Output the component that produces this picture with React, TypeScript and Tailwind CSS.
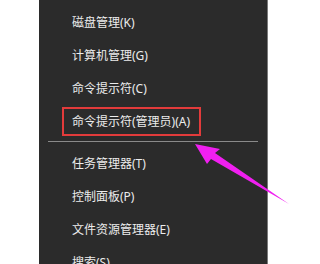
const topItems = ["磁盘管理(K)", "计算机管理(G)", "命令提示符(C)"];
const bottomItems = ["任务管理器(T)", "控制面板(P)", "文件资源管理器(E)", "搜索(S)"];

function MenuRow({ label }: { label: string }) {
  return (
    <div className="h-[33px] flex items-center pl-[33px] text-[12px] text-[#ececec] whitespace-nowrap">
      {label}
    </div>
  );
}

export default function App() {
  return (
    <div
      className="relative w-[316px] h-[264px] overflow-hidden bg-white"
      style={{ fontFamily: '"Noto Sans", "Noto Sans CJK SC", sans-serif' }}
    >
      <div className="ml-[39px] w-[229px] h-[264px] bg-[#2b2b2b] border-r border-[#7a7a7a] pt-[6px]">
        {topItems.map((item) => (
          <MenuRow key={item} label={item} />
        ))}

        <div className="h-[33px] flex items-center pl-[23px]">
          <div className="h-[29px] w-[139px] flex items-center pl-[8px] border-2 border-[#e23b3b] text-[12px] text-[#ececec] whitespace-nowrap">
            命令提示符(管理员)(A)
          </div>
        </div>

        <div className="h-[9px] pt-[3px] px-[9px]">
          <div className="h-px bg-[#8a8a8a]" />
        </div>

        {bottomItems.map((item) => (
          <MenuRow key={item} label={item} />
        ))}
      </div>

      {/* annotation arrow */}
      <svg className="absolute left-0 top-0" width="316" height="264" viewBox="0 0 316 264">
        <polygon
          points="195,144 220,149 215,153 289,204 211,159 207,164"
          fill="#f01ff0"
        />
      </svg>
    </div>
  );
}
